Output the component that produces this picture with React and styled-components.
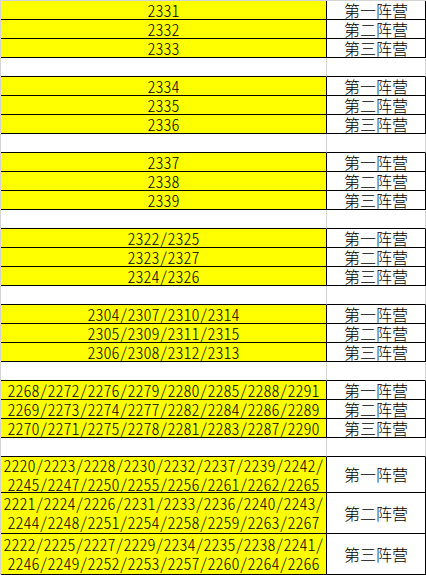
import React from "react";
import styled, { createGlobalStyle } from "styled-components";

const GlobalStyle = createGlobalStyle`
  html, body { margin: 0; padding: 0; background: #ffffff; }
`;

const GRID = "#d4d4d4";

const Sheet = styled.div`
  display: grid;
  grid-template-columns: 326px 99px;
  width: 426px;
  border-left: 1px solid ${GRID};
  border-top: 1px solid ${GRID};
  font-family: "Noto Sans CJK SC", "Noto Sans", sans-serif;
  font-size: 16px;
  font-weight: 300;
  color: #000;
`;

const Cell = styled.div`
  box-sizing: border-box;
  height: ${(p) => p.$h}px;
  border-right: 1px solid ${(p) => (p.$blank ? GRID : "#000")};
  border-bottom: 1px solid #000;
  background: ${(p) => (p.$fill ? "#ffff00" : "#ffffff")};
  display: flex;
  flex-direction: column;
  align-items: center;
  justify-content: center;
  overflow: visible;
  white-space: nowrap;
`;

const Line = styled.span`
  display: block;
  line-height: ${(p) => (p.$tall ? 19 : 18)}px;
  font-feature-settings: "hwid" 1;
`;

const Name = styled.span`
  display: block;
  line-height: ${(p) => (p.$tall ? 19 : 18)}px;
`;

const names = ["第一阵营", "第二阵营", "第三阵营"];

const groups = [
  [["2331"], ["2332"], ["2333"]],
  [["2334"], ["2335"], ["2336"]],
  [["2337"], ["2338"], ["2339"]],
  [["2322/2325"], ["2323/2327"], ["2324/2326"]],
  [
    ["2304/2307/2310/2314"],
    ["2305/2309/2311/2315"],
    ["2306/2308/2312/2313"],
  ],
  [
    ["2268/2272/2276/2279/2280/2285/2288/2291"],
    ["2269/2273/2274/2277/2282/2284/2286/2289"],
    ["2270/2271/2275/2278/2281/2283/2287/2290"],
  ],
];

const tallGroup = [
  {
    h: 36,
    lines: [
      "2220/2223/2228/2230/2232/2237/2239/2242/",
      "2245/2247/2250/2255/2256/2261/2262/2265",
    ],
  },
  {
    h: 41,
    lines: [
      "2221/2224/2226/2231/2233/2236/2240/2243/",
      "2244/2248/2251/2254/2258/2259/2263/2267",
    ],
  },
  {
    h: 41,
    lines: [
      "2222/2225/2227/2229/2234/2235/2238/2241/",
      "2246/2249/2252/2253/2257/2260/2264/2266",
    ],
  },
];

function BlankRow() {
  return (
    <>
      <Cell $h={19} $blank />
      <Cell $h={19} $blank />
    </>
  );
}

export default function App() {
  return (
    <>
      <GlobalStyle />
      <Sheet>
        {groups.map((g, gi) => (
          <React.Fragment key={gi}>
            {g.map((lines, ri) => (
              <React.Fragment key={ri}>
                <Cell $h={19} $fill>
                  {lines.map((t) => (
                    <Line key={t}>{t}</Line>
                  ))}
                </Cell>
                <Cell $h={19}>
                  <Name>{names[ri]}</Name>
                </Cell>
              </React.Fragment>
            ))}
            <BlankRow />
          </React.Fragment>
        ))}
        {tallGroup.map((row, ri) => (
          <React.Fragment key={ri}>
            <Cell $h={row.h} $fill>
              {row.lines.map((t) => (
                <Line key={t} $tall>
                  {t}
                </Line>
              ))}
            </Cell>
            <Cell $h={row.h}>
              <Name $tall>{names[ri]}</Name>
            </Cell>
          </React.Fragment>
        ))}
      </Sheet>
    </>
  );
}
